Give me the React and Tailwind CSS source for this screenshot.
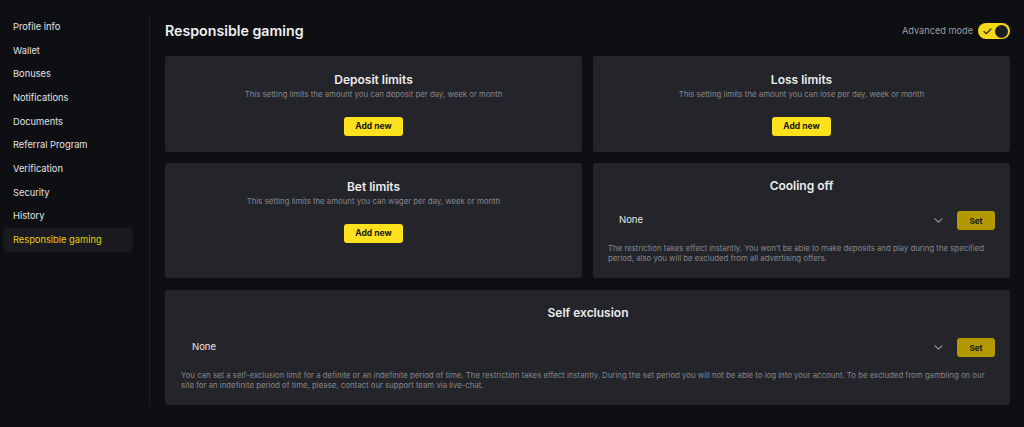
import React from "react";

const font = { fontFamily: "Inter, 'Noto Sans', sans-serif" };

const items = [
  "Profile info",
  "Wallet",
  "Bonuses",
  "Notifications",
  "Documents",
  "Referral Program",
  "Verification",
  "Security",
  "History",
  "Responsible gaming",
];

function Chevron() {
  return (
    <svg width="9" height="5" viewBox="0 0 9 5" fill="none">
      <path d="M1 0.8l3.5 3.4L8 0.8" stroke="#9a9ba0" strokeWidth="1.1" strokeLinecap="round" strokeLinejoin="round" />
    </svg>
  );
}

function LimitCard({ title, desc, tall }) {
  return (
    <div className={`bg-[#24252a] rounded-[3px] flex flex-col items-center ${tall ? "h-[115px]" : "h-[96px]"}`}>
      <div className="mt-[16px] h-[16px] flex items-center text-[12px] font-semibold text-[#ececec]">{title}</div>
      <div className="mt-[-1px] h-[16px] flex items-center text-[7.8px] text-[#85868b]">{desc}</div>
      <button className="mt-[14px] w-[59px] h-[19px] rounded-[3px] bg-[#fde11d] text-[8.5px] font-bold text-[#15161a] flex items-center justify-center">
        Add new
      </button>
    </div>
  );
}

function SelectRow() {
  return (
    <div className="flex items-center h-[19px]">
      <div className="flex-1 flex items-center justify-between pl-[11px] pr-[14px]">
        <span className="text-[9.5px] text-[#e6e6e6]">None</span>
        <Chevron />
      </div>
      <button className="w-[38px] h-[19px] rounded-[3px] bg-[#b39800] text-[8px] font-bold text-[#17181a] flex items-center justify-center">
        Set
      </button>
    </div>
  );
}

export default function App() {
  return (
    <div style={font} className="w-[1024px] h-[427px] bg-[#0e0f13] flex overflow-hidden">
      <div className="w-[149px] pt-[15px] pl-[3px]">
        {items.map((it, i) => {
          const active = i === items.length - 1;
          return (
            <div
              key={it}
              className={`w-[130px] h-[23.7px] flex items-center pl-[10px] text-[9.3px] rounded-[5px] ${
                active ? "bg-[#1a1b20] text-[#e8cb14]" : "text-[#e2e2e4]"
              }`}
            >
              {it}
            </div>
          );
        })}
      </div>
      <div className="w-px bg-[#1f2026] mt-[16px] h-[389px]" />
      <div className="flex-1 pl-[15px] pr-[14px] pt-[20px]">
        <div className="h-[22px] flex items-center justify-between">
          <div className="text-[14.2px] font-semibold text-[#f0f0f0]">Responsible gaming</div>
          <div className="flex items-center gap-[5px]">
            <span className="text-[9.2px] text-[#9a9ba0]">Advanced mode</span>
            <div className="w-[32px] h-[16px] rounded-full bg-[#f5d916] flex items-center justify-between pl-[5px] pr-[2px]">
              <svg width="9" height="7" viewBox="0 0 9 7" fill="none">
                <path d="M1 3.5l2.2 2.2L8 1" stroke="#2a2a2a" strokeWidth="1.2" strokeLinecap="round" strokeLinejoin="round" />
              </svg>
              <div className="w-[13px] h-[13px] rounded-full bg-[#1c1d21]" />
            </div>
          </div>
        </div>
        <div className="mt-[14px] grid grid-cols-2 gap-x-[11px] gap-y-[11px]">
          <LimitCard title="Deposit limits" desc="This setting limits the amount you can deposit per day, week or month" />
          <LimitCard title="Loss limits" desc="This setting limits the amount you can lose per day, week or month" />
          <LimitCard tall title="Bet limits" desc="This setting limits the amount you can wager per day, week or month" />
          <div className="bg-[#24252a] rounded-[3px] h-[115px] px-[15px] flex flex-col">
            <div className="mt-[15px] h-[16px] flex items-center justify-center text-[12px] font-semibold text-[#ececec]">
              Cooling off
            </div>
            <div className="mt-[17px]">
              <SelectRow />
            </div>
            <div className="mt-[13px] text-[7.8px] leading-[10px] text-[#85868b]">
              The restriction takes effect instantly. You won’t be able to make deposits and play during the specified period, also you will be excluded from all advertising offers.
            </div>
          </div>
        </div>
        <div className="mt-[12px] bg-[#24252a] rounded-[3px] h-[115px] pl-[16px] pr-[15px] flex flex-col">
          <div className="mt-[15px] h-[16px] flex items-center justify-center text-[12px] font-semibold text-[#ececec]">
            Self exclusion
          </div>
          <div className="mt-[17px]">
            <SelectRow />
          </div>
          <div className="mt-[13px] text-[7.8px] leading-[10px] text-[#85868b]">
            You can set a self-exclusion limit for a definite or an indefinite period of time. The restriction takes effect instantly. During the set period you will not be able to log into your account. To be excluded from gambling on our site for an indefinite period of time, please, contact our support team via live-chat.
          </div>
        </div>
      </div>
    </div>
  );
}
